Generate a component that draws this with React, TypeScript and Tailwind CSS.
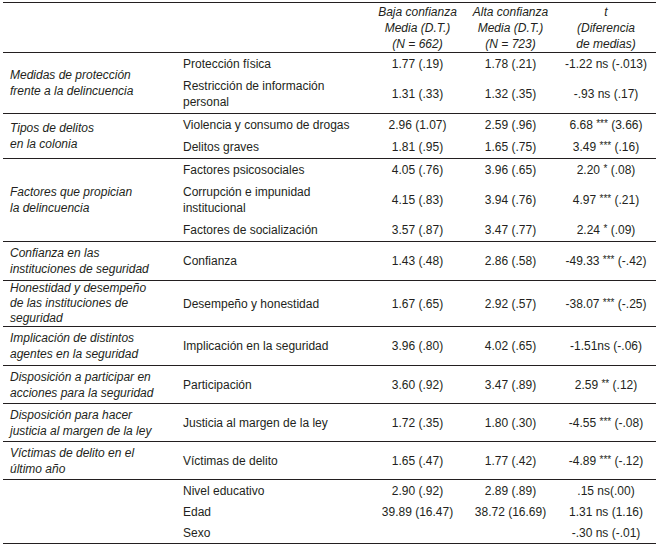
import type { ReactNode } from 'react'

type Row = {
  item: ReactNode
  low: string
  high: string
  t: ReactNode
}

type Group = {
  label: ReactNode
  rows: Row[]
  tall?: boolean
  tight?: boolean
}

function Stars({ n }: { n: string }) {
  return <span className="align-[2px] text-[10px] leading-none">{n}</span>
}

const groups: Group[] = [
  {
    label: (
      <>
        Medidas de protección
        <br />
        frente a la delincuencia
      </>
    ),
    rows: [
      { item: 'Protección física', low: '1.77 (.19)', high: '1.78 (.21)', t: '-1.22 ns (-.013)' },
      {
        item: (
          <>
            Restricción de información
            <br />
            personal
          </>
        ),
        low: '1.31 (.33)',
        high: '1.32 (.35)',
        t: '-.93 ns (.17)',
      },
    ],
  },
  {
    label: (
      <>
        Tipos de delitos
        <br />
        en la colonia
      </>
    ),
    rows: [
      {
        item: 'Violencia y consumo de drogas',
        low: '2.96 (1.07)',
        high: '2.59 (.96)',
        t: (
          <>
            6.68 <Stars n="***" /> (3.66)
          </>
        ),
      },
      {
        item: 'Delitos graves',
        low: '1.81 (.95)',
        high: '1.65 (.75)',
        t: (
          <>
            3.49 <Stars n="***" /> (.16)
          </>
        ),
      },
    ],
  },
  {
    label: (
      <>
        Factores que propician
        <br />
        la delincuencia
      </>
    ),
    rows: [
      {
        item: 'Factores psicosociales',
        low: '4.05 (.76)',
        high: '3.96 (.65)',
        t: (
          <>
            2.20 <Stars n="*" /> (.08)
          </>
        ),
      },
      {
        item: (
          <>
            Corrupción e impunidad
            <br />
            institucional
          </>
        ),
        low: '4.15 (.83)',
        high: '3.94 (.76)',
        t: (
          <>
            4.97 <Stars n="***" /> (.21)
          </>
        ),
      },
      {
        item: 'Factores de socialización',
        low: '3.57 (.87)',
        high: '3.47 (.77)',
        t: (
          <>
            2.24 <Stars n="*" /> (.09)
          </>
        ),
      },
    ],
  },
  {
    label: (
      <>
        Confianza en las
        <br />
        instituciones de seguridad
      </>
    ),
    rows: [
      {
        item: 'Confianza',
        low: '1.43 (.48)',
        high: '2.86 (.58)',
        t: (
          <>
            -49.33 <Stars n="***" /> (-.42)
          </>
        ),
      },
    ],
  },
  {
    label: (
      <>
        Honestidad y desempeño
        <br />
        de las instituciones de
        <br />
        seguridad
      </>
    ),
    tall: true,
    rows: [
      {
        item: 'Desempeño y honestidad',
        low: '1.67 (.65)',
        high: '2.92 (.57)',
        t: (
          <>
            -38.07 <Stars n="***" /> (-.25)
          </>
        ),
      },
    ],
  },
  {
    label: (
      <>
        Implicación de distintos
        <br />
        agentes en la seguridad
      </>
    ),
    rows: [
      { item: 'Implicación en la seguridad', low: '3.96 (.80)', high: '4.02 (.65)', t: '-1.51ns (-.06)' },
    ],
  },
  {
    label: (
      <>
        Disposición a participar en
        <br />
        acciones para la seguridad
      </>
    ),
    tight: true,
    rows: [
      {
        item: 'Participación',
        low: '3.60 (.92)',
        high: '3.47 (.89)',
        t: (
          <>
            2.59 <Stars n="**" /> (.12)
          </>
        ),
      },
    ],
  },
  {
    label: (
      <>
        Disposición para hacer
        <br />
        justicia al margen de la ley
      </>
    ),
    tight: true,
    rows: [
      {
        item: 'Justicia al margen de la ley',
        low: '1.72 (.35)',
        high: '1.80 (.30)',
        t: (
          <>
            -4.55 <Stars n="***" /> (-.08)
          </>
        ),
      },
    ],
  },
  {
    label: (
      <>
        Víctimas de delito en el
        <br />
        último año
      </>
    ),
    tight: true,
    rows: [
      {
        item: 'Víctimas de delito',
        low: '1.65 (.47)',
        high: '1.77 (.42)',
        t: (
          <>
            -4.89 <Stars n="***" /> (-.12)
          </>
        ),
      },
    ],
  },
  {
    label: '',
    tight: true,
    rows: [
      { item: 'Nivel educativo', low: '2.90 (.92)', high: '2.89 (.89)', t: '.15 ns(.00)' },
      { item: 'Edad', low: '39.89 (16.47)', high: '38.72 (16.69)', t: '1.31 ns (1.16)' },
      { item: 'Sexo', low: '', high: '', t: '-.30 ns (-.01)' },
    ],
  },
]

const cell = 'px-0 pt-[3px] pb-[3px] align-middle leading-[16px]'
const tightCell = 'px-0 pt-[3px] pb-[2px] align-middle leading-[16px]'

export default function App() {
  return (
    <div className="min-h-[547px] w-[660px] bg-white pt-[2px] text-[12px] text-[#231f20] [font-family:'Liberation_Sans',Arial,sans-serif]">
      <table className="ml-[3px] w-[653px] table-fixed border-collapse">
        <colgroup>
          <col className="w-[175px]" />
          <col className="w-[192px]" />
          <col className="w-[95px]" />
          <col className="w-[91px]" />
          <col className="w-[100px]" />
        </colgroup>
        <thead>
          <tr className="border-y border-[#231f20]">
            <th />
            <th />
            <th className="pt-[1px] pb-0 text-center font-normal italic leading-[16px]">
              Baja confianza
              <br />
              Media (D.T.)
              <br />
              (N = 662)
            </th>
            <th className="pt-[1px] pb-0 text-center font-normal italic leading-[16px]">
              Alta confianza
              <br />
              Media (D.T.)
              <br />
              (N = 723)
            </th>
            <th className="pt-[1px] pb-0 text-center font-normal italic leading-[16px]">
              t
              <br />
              (Diferencia
              <br />
              de medias)
            </th>
          </tr>
        </thead>
        {groups.map((g, gi) => {
          const c = g.tight ? tightCell : cell
          return (
            <tbody key={gi} className="border-b border-[#231f20]">
              {g.rows.map((r, ri) => (
                <tr key={ri}>
                  {ri === 0 && (
                    <td
                      rowSpan={g.rows.length}
                      className={`whitespace-nowrap pl-[7px] italic ${
                        g.tall ? 'py-0 align-middle leading-[15px]' : c
                      }`}
                    >
                      {g.label}
                    </td>
                  )}
                  <td className={`${c} whitespace-nowrap pl-[5px]`}>{r.item}</td>
                  <td className={`${c} text-center`}>{r.low}</td>
                  <td className={`${c} text-center`}>{r.high}</td>
                  <td className={`${c} text-center`}>{r.t}</td>
                </tr>
              ))}
            </tbody>
          )
        })}
      </table>
    </div>
  )
}
